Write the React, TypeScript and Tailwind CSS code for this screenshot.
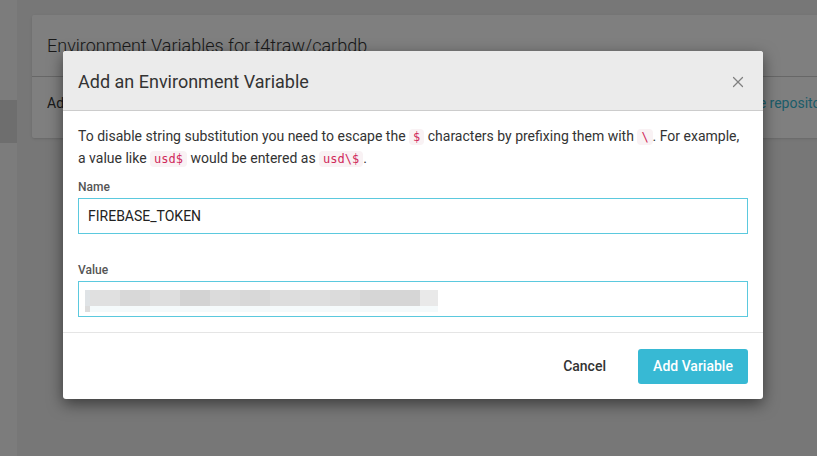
import { X } from "lucide-react";

const blur = [
  { w: 5, c: "#dfe3e6" },
  { w: 30, c: "#e0e0e0" },
  { w: 30, c: "#d8d8d8" },
  { w: 30, c: "#dedede" },
  { w: 30, c: "#d3d3d3" },
  { w: 30, c: "#dbdbdb" },
  { w: 30, c: "#d8d8d8" },
  { w: 30, c: "#dddddd" },
  { w: 30, c: "#dedede" },
  { w: 30, c: "#dbdbdb" },
  { w: 60, c: "#d6d6d6" },
  { w: 18, c: "#e9e9e9" },
];

function Code({ children }: { children: string }) {
  return (
    <code className="rounded-[4px] bg-[#f9f2f4] px-[4px] py-[1px] font-['DejaVu_Sans_Mono',monospace] text-[12px] text-[#d0285a]">
      {children}
    </code>
  );
}

export default function App() {
  return (
    <div className="relative flex h-[456px] w-[817px] overflow-hidden bg-[#eeeeee] font-['Roboto',sans-serif]">
      {/* sidebar */}
      <div className="w-[17px] shrink-0 bg-[#f8f8f8] pt-[100px]">
        <div className="h-[43px] bg-[#dcdcdc]" />
      </div>

      {/* page */}
      <div className="pl-[15px] pt-[15px]">
        <div className="w-[815px] rounded-[2px] bg-white shadow-sm">
          <div className="border-b border-[#cfcfcf] px-[15px] pt-[16px] pb-[15px] text-[18px] font-light leading-[30px] text-[#333]">
            Environment Variables for t4traw/carbdb
          </div>
          <div className="flex h-[61px] items-start justify-between px-[15px] pt-[15px] text-[14px] leading-[22px] text-[#333]">
            <span>Add environment variables to the project build.</span>
            <span className="text-[#39b9d4]">the repository</span>
          </div>
        </div>
      </div>

      {/* overlay */}
      <div className="absolute inset-0 bg-black/50" />

      {/* modal */}
      <div className="absolute left-[63px] top-[51px] w-[700px] overflow-hidden rounded-[3px] bg-white shadow-[0_5px_15px_rgba(0,0,0,0.5)]">
        <div className="flex h-[60px] items-center justify-between border-b border-[#cccccc] bg-[#ebebeb] pl-[15px] pr-[16px]">
          <h2 className="translate-y-[1px] text-[18px] font-normal text-[#333]">Add an Environment Variable</h2>
          <X size={18} strokeWidth={1.6} className="translate-y-[1px] text-[#808080]" />
        </div>

        <div className="px-[15px] pt-[15px] pb-[15px] text-[14px] text-[#333]">
          <p className="leading-[21px]">
            To disable string substitution you need to escape the <Code>$</Code> characters by prefixing them with{" "}
            <Code>\</Code>. For example, a value like <Code>usd$</Code> would be entered as <Code>usd\$</Code>.
          </p>

          <label className="mt-[9px] block text-[12px] font-medium leading-[16px] text-[#555]">Name</label>
          <div className="mt-[3px] flex h-[36px] items-center border border-[#5bc9de] px-[9px] text-[14px] text-[#222]">
            FIREBASE_TOKEN
          </div>

          <label className="mt-[28px] block text-[12px] font-medium leading-[16px] text-[#555]">Value</label>
          <div className="mt-[3px] h-[36px] border border-[#5bc9de] pl-[6px] pt-[8px]">
            <div className="flex h-[16px]">
              {blur.map((b, i) => (
                <div key={i} className="h-full" style={{ width: b.w, background: b.c }} />
              ))}
            </div>
            <div className="flex h-[6px] w-[353px] bg-[#f5fafb]">
              <div className="h-full w-[5px] bg-[#dcdcdc]" />
            </div>
          </div>
        </div>

        <div className="flex items-center justify-end gap-[16px] border-t border-[#e5e5e5] px-[15px] pt-[16px] pb-[15px]">
          <button className="px-[16px] text-[14px] font-medium text-[#333]">Cancel</button>
          <button className="h-[35px] w-[110px] rounded-[3px] bg-[#37b9d4] text-[14px] font-medium text-white">
            Add Variable
          </button>
        </div>
      </div>
    </div>
  );
}
